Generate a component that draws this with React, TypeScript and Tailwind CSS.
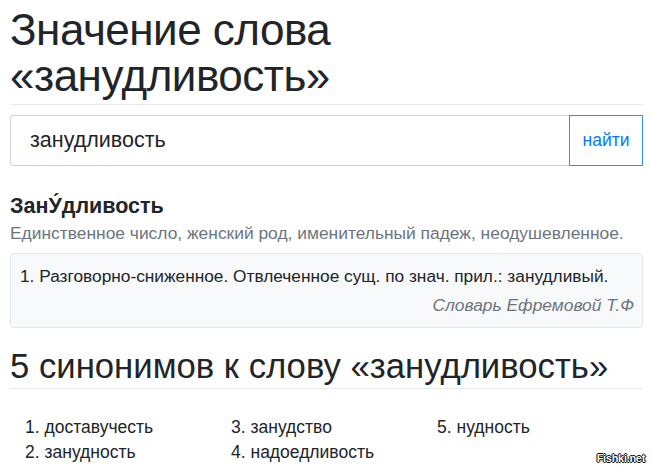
import React from "react";

export default function App() {
  const syn = [
    ["доставучесть", "занудность"],
    ["занудство", "надоедливость"],
    ["нудность"],
  ];
  let n = 0;
  return (
    <div className="relative w-[650px] h-[470px] overflow-hidden bg-white text-[#212529] font-['Liberation_Sans',Arial,sans-serif]">
      <div className="pl-[10px] pr-[7px]">
        <h1 className="text-[44px] leading-[46px] pt-[7px] pb-[5px] border-b border-[#e9ecef] tracking-[-0.5px]">
          Значение слова «занудливость»
        </h1>
        <div className="flex mt-[10px] h-[51px]">
          <div className="flex-1 flex items-center pl-[19px] text-[21.5px] border border-[#ced4da] rounded-l-[4px] border-r-0">
            занудливость
          </div>
          <div className="w-[74px] flex items-center justify-center text-[17.5px] text-[#007bff] border border-[#3d8ce8]">
            найти
          </div>
        </div>
        <div className="mt-[27px] text-[21.5px] font-bold leading-[26px]">ЗанУ́дливость</div>
        <div className="mt-[2px] text-[17.4px] text-[#6c757d] leading-[24px]">
          Единственное число, женский род, именительный падеж, неодушевленное.
        </div>
        <div className="mt-[8px] h-[75px] bg-[#f8f9fa] border border-[#e3e6ea] rounded-[4px] pl-[9px] pr-[8px] pt-[10px]">
          <div className="text-[17.3px] leading-[24px]">
            1. Разговорно-сниженное. Отвлеченное сущ. по знач. прил.: занудливый.
          </div>
          <div className="text-right text-[17.4px] italic text-[#6c757d] leading-[24px] mt-[5px]">
            Словарь Ефремовой Т.Ф
          </div>
        </div>
        <h2 className="mt-[18px] text-[34.7px] leading-[40px] pb-[2px] border-b border-[#e9ecef]">
          5 синонимов к слову «занудливость»
        </h2>
        <div className="grid grid-cols-[206px_206px_206px] pl-[15px] mt-[26px] text-[17.5px] leading-[25px]">
          {syn.map((col, ci) => (
            <div key={ci}>
              {col.map((w) => {
                n += 1;
                return (
                  <div key={w}>
                    {n}. {w}
                  </div>
                );
              })}
            </div>
          ))}
        </div>
      </div>
      <div className="absolute right-[5px] bottom-[4px] text-[11px] font-bold text-white [text-shadow:-1px_0_0_#000,1px_0_0_#000,0_-1px_0_#000,0_1px_0_#000] tracking-[-0.3px]">
        Fishki.net
      </div>
    </div>
  );
}
